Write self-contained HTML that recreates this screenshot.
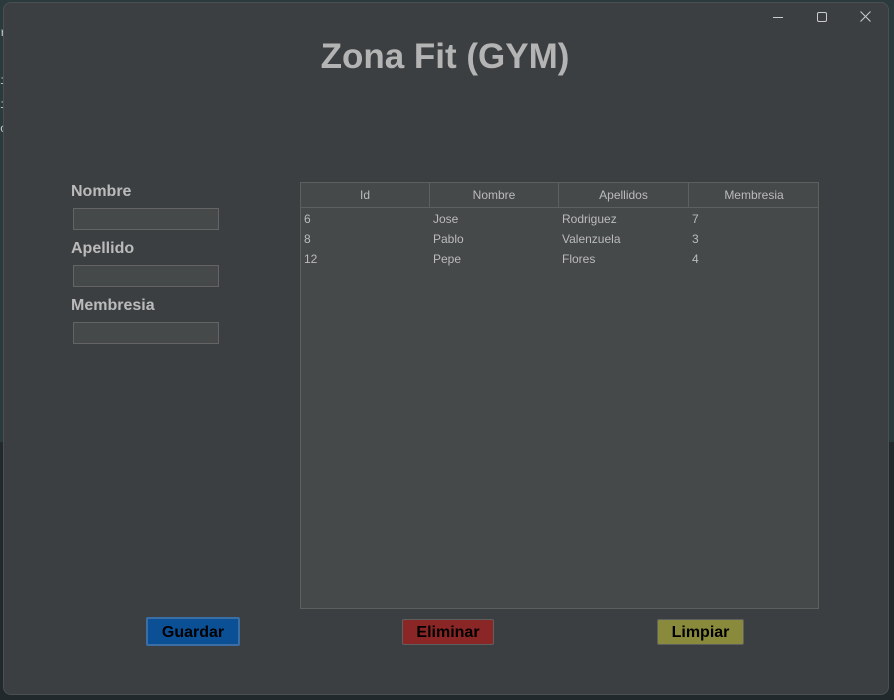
<!DOCTYPE html>
<html><head><meta charset="utf-8"><style>
body{margin:0;width:894px;height:700px;overflow:hidden;background:#22292c;position:relative;font-family:"Liberation Sans",Arial,sans-serif}
.bgtop{position:absolute;left:0;top:0;width:894px;height:442px;background:#2b3a3c}
.win{position:absolute;left:3px;top:2px;width:886px;height:693px;background:#3c3f41;border-radius:8px;border:1px solid #4a5052;box-sizing:border-box}
.side{position:absolute;left:0;font-family:"Liberation Mono",monospace;font-size:12px;color:#ccc}
.t{position:absolute;color:#bbbbbb;font-weight:bold}
.title{left:0;width:890px;text-align:center;top:37px;font-size:35px;color:#b4b4b4}
.lbl{left:71px;font-size:16px}
.f{position:absolute;left:73px;width:146px;height:22px;box-sizing:border-box;background:#45494a;border:1px solid #646464}
.tbl{position:absolute;left:300px;top:182px;width:519px;height:427px;box-sizing:border-box;background:#45494a;border:1px solid #5e6060}
.hd{position:absolute;top:0;height:25px;border-right:1px solid #5e6060;border-bottom:1px solid #5e6060;box-sizing:border-box;color:#bbb;font-size:12px;text-align:center;line-height:25px}
.c{position:absolute;color:#bbb;font-size:12px}
.b{position:absolute;top:619px;height:26px;box-sizing:border-box;font-weight:bold;font-size:16px;color:#000;text-align:center;line-height:26px;border-radius:2px;border:1px solid #5e6060}
.ic{position:absolute;top:10px}
</style></head><body>
<div class="bgtop"></div>
<div class="side" style="top:26px">r</div>
<div class="side" style="top:74px">i</div>
<div class="side" style="top:98px">i</div>
<div class="side" style="top:122px">o</div>
<div class="win"></div>
<svg class="ic" style="left:770px" width="16" height="16"><line x1="3" y1="7.5" x2="13" y2="7.5" stroke="#ccc" stroke-width="1"/></svg>
<svg class="ic" style="left:814px" width="16" height="16"><rect x="3.5" y="2.5" width="9" height="9" rx="1.5" fill="none" stroke="#ccc"/></svg>
<svg class="ic" style="left:858px" width="16" height="16"><path d="M2.5 1.5L12.5 11.5M12.5 1.5L2.5 11.5" stroke="#ccc"/></svg>
<div class="t title">Zona Fit (GYM)</div>
<div class="t lbl" style="top:183px">Nombre</div>
<div class="f" style="top:208px"></div>
<div class="t lbl" style="top:240px">Apellido</div>
<div class="f" style="top:265px"></div>
<div class="t lbl" style="top:297px">Membresia</div>
<div class="f" style="top:322px"></div>
<div class="tbl">
<div class="hd" style="left:0;width:129px">Id</div>
<div class="hd" style="left:129px;width:129px">Nombre</div>
<div class="hd" style="left:258px;width:130px">Apellidos</div>
<div class="hd" style="left:388px;width:130px;border-right:none">Membresia</div>
<div class="c" style="left:3px;top:29px">6</div><div class="c" style="left:132px;top:29px">Jose</div><div class="c" style="left:261px;top:29px">Rodriguez</div><div class="c" style="left:391px;top:29px">7</div>
<div class="c" style="left:3px;top:49px">8</div><div class="c" style="left:132px;top:49px">Pablo</div><div class="c" style="left:261px;top:49px">Valenzuela</div><div class="c" style="left:391px;top:49px">3</div>
<div class="c" style="left:3px;top:69px">12</div><div class="c" style="left:132px;top:69px">Pepe</div><div class="c" style="left:261px;top:69px">Flores</div><div class="c" style="left:391px;top:69px">4</div>
</div>
<div class="b" style="left:146px;top:617px;height:29px;width:94px;background:#0b4f95;border:2px solid #3a6ea5;line-height:27px">Guardar</div>
<div class="b" style="left:402px;width:92px;background:#8a2626">Eliminar</div>
<div class="b" style="left:657px;width:87px;background:#8a8a3c">Limpiar</div>
</body></html>
